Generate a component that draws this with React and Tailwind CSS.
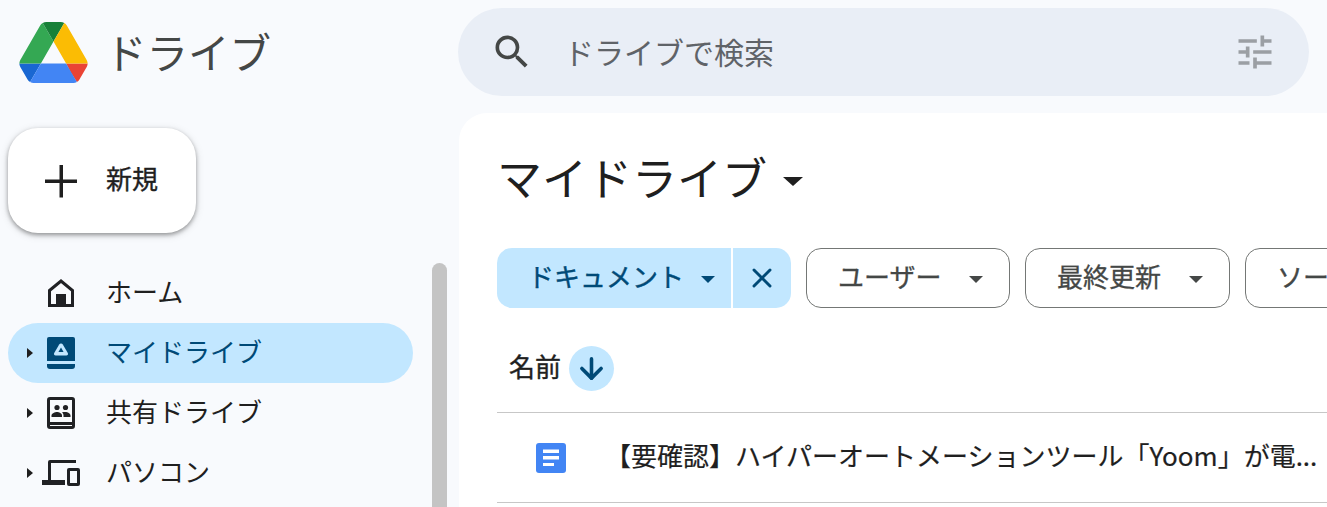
import { X, ArrowDown } from 'lucide-react'

const jp = 'font-["Noto_Sans_CJK_JP","Noto_Sans",sans-serif]'

function DriveLogo() {
  return (
    <svg viewBox="0 0 87.3 78" className="w-[69px] h-[61px] shrink-0">
      <path d="m6.6 66.85 3.85 6.65c.8 1.4 1.95 2.5 3.3 3.3l13.75-23.8h-27.5c0 1.55.4 3.1 1.2 4.5z" fill="#1967d2" />
      <path d="m43.65 25-13.75-23.8c-1.35.8-2.5 1.9-3.3 3.3l-25.4 44a9.06 9.06 0 0 0 -1.2 4.5h27.5z" fill="#34a853" />
      <path d="m73.55 76.8c1.35-.8 2.5-1.9 3.3-3.3l1.6-2.75 7.65-13.25c.8-1.4 1.2-2.95 1.2-4.5h-27.502l5.852 11.5z" fill="#ea4335" />
      <path d="m43.65 25 13.75-23.8c-1.35-.8-2.9-1.2-4.5-1.2h-18.5c-1.6 0-3.15.45-4.5 1.2z" fill="#188038" />
      <path d="m59.8 53h-32.3l-13.75 23.8c1.35.8 2.9 1.2 4.5 1.2h50.8c1.6 0 3.15-.45 4.5-1.2z" fill="#4285f4" />
      <path d="m73.4 26.5-12.7-22c-.8-1.4-1.95-2.5-3.3-3.3l-13.75 23.8 16.15 28h27.45c0-1.55-.4-3.1-1.2-4.5z" fill="#fbbc04" />
    </svg>
  )
}

function SearchIcon() {
  return (
    <svg viewBox="0 0 24 24" className="w-[44px] h-[44px] shrink-0" fill="#444746">
      <path d="M15.5 14h-.79l-.28-.27A6.471 6.471 0 0 0 16 9.5 6.5 6.5 0 1 0 9.5 16c1.61 0 3.09-.59 4.23-1.57l.27.28v.79l5 4.99L20.49 19l-4.99-5zm-6 0C7.01 14 5 11.99 5 9.5S7.01 5 9.5 5 14 7.01 14 9.5 11.99 14 9.5 14z" />
    </svg>
  )
}

function TuneIcon() {
  return (
    <svg viewBox="0 0 24 24" className="w-[44px] h-[44px]" fill="#9b9fa4">
      <path d="M3 17v2h6v-2H3zM3 5v2h10V5H3zm10 16v-2h8v-2h-8v-2h-2v6h2zM7 9v2H3v2h4v2h2V9H7zm14 4v-2H11v2h10zm-6-4h2V7h4V5h-4V3h-2v6z" />
    </svg>
  )
}

function HomeIcon() {
  return (
    <svg viewBox="0 0 26 28" className="w-[26px] h-[28px]" fill="none">
      <path d="M1.500 11.500 13 2l11.500 9.500v15h-23z" stroke="#202124" strokeWidth="3" />
      <rect x="8" y="15" width="10" height="12" fill="#202124" />
    </svg>
  )
}

function MyDriveIcon() {
  return (
    <svg viewBox="0 0 28 32" className="w-[28px] h-[32px]">
      <path d="M2 0h24a2 2 0 0 1 2 2v22H0V2a2 2 0 0 1 2-2z" fill="#004a77" />
      <path d="M0 27h28v2a3 3 0 0 1-3 3H3a3 3 0 0 1-3-3z" fill="#004a77" />
      <path d="M14 6.500c.8 0 1.400.4 1.800 1l5 8.500c.7 1.200-.1 2.500-1.500 2.500H8.700c-1.400 0-2.200-1.300-1.500-2.500l5-8.500c.4-.6 1-1 1.800-1z" fill="#c2e7ff" />
      <path d="M14 10.500l2.600 4.500h-5.200z" fill="#004a77" />
    </svg>
  )
}

function SharedIcon() {
  return (
    <svg viewBox="0 0 28 32" className="w-[28px] h-[32px]" fill="#202124">
      <path fillRule="evenodd" d="M3 0h22a3 3 0 0 1 3 3v26a3 3 0 0 1-3 3H3a3 3 0 0 1-3-3V3a3 3 0 0 1 3-3zm0 3v22h22V3zm0 25v1h22v-1z" />
      <circle cx="10" cy="10.500" r="2.600" />
      <circle cx="18.500" cy="10.500" r="2.600" />
      <path d="M4.500 20v-1.500c0-2 3.500-3.500 5.500-3.500s5 1.500 5 3.500V20z" />
      <path d="M16.500 20v-1.500c0-1.300-.6-2.400-1.500-3.200 1-.2 2.500-.3 3.500-.3 2 0 5 1.500 5 3.500V20z" />
    </svg>
  )
}

function ComputerIcon() {
  return (
    <svg viewBox="0 0 38 26" className="w-[38px] h-[26px]" fill="#202124">
      <path d="M6 2a2 2 0 0 1 2-2h26v3H9v17h14v5H0v-5h6z" />
      <path fillRule="evenodd" d="M27 8h9a2 2 0 0 1 2 2v14a2 2 0 0 1-2 2h-9a2 2 0 0 1-2-2V10a2 2 0 0 1 2-2zm1 3v12h7V11z" />
    </svg>
  )
}

function Caret({ className }) {
  return <div className={`w-0 h-0 border-x-[7px] border-x-transparent border-t-[7px] ${className}`} />
}

function NavItem({ icon, label, active, arrow }) {
  return (
    <div className={`flex items-center h-[60px] ml-2 w-[405px] rounded-full ${active ? 'bg-[#c2e7ff] text-[#004a77]' : 'text-[#1f1f1f]'}`}>
      <div className="w-[25px] flex justify-end">
        {arrow && <div className="w-0 h-0 border-y-[5.5px] border-y-transparent border-l-[6px] border-l-[#1f1f1f]" />}
      </div>
      <div className="w-[56px] flex justify-center">{icon}</div>
      <span className="ml-[17px] mb-[5px] text-[26px] leading-none whitespace-nowrap">{label}</span>
    </div>
  )
}

function FilterChip({ label, width }) {
  return (
    <div className={`${width} h-[60px] shrink-0 rounded-[15px] border border-[#747775] flex items-center justify-between pl-[31px] pr-[26px] text-[#444746]`}>
      <span className="mb-[5px] text-[26px] leading-none whitespace-nowrap [-webkit-text-stroke:0.3px]">{label}</span>
      <Caret className="border-t-[#444746] mt-[2px] ml-4" />
    </div>
  )
}

export default function App() {
  return (
    <div className={`w-[1327px] h-[507px] overflow-hidden bg-[#f8fafd] flex flex-col ${jp}`}>
      {/* Header */}
      <div className="h-[113px] shrink-0 flex pt-2">
        <div className="w-[458px] shrink-0 flex items-start pl-[19px] pt-[14px]">
          <DriveLogo />
          <span className="ml-[17px] mt-[3px] text-[41.500px] leading-[52px] text-[#444746] whitespace-nowrap">ドライブ</span>
        </div>
        <div className="w-[851px] h-[88px] rounded-full bg-[#e9eef6] flex items-center pl-[32px] pr-[32px]">
          <SearchIcon />
          <span className="ml-[30px] mb-[2px] text-[30px] leading-none text-[#5f6368] whitespace-nowrap flex-1">ドライブで検索</span>
          <TuneIcon />
        </div>
      </div>

      <div className="flex flex-1 min-h-0">
        {/* Sidebar */}
        <div className="w-[459px] shrink-0 flex">
          <div className="w-[432px] shrink-0">
            <div className="ml-2 mt-[15px] w-[188px] h-[105px] rounded-[30px] bg-white shadow-[0_2px_4px_rgba(0,0,0,0.35),0_2px_10px_rgba(0,0,0,0.12)] flex items-center pl-[32px]">
              <svg viewBox="0 0 42 42" className="w-[42px] h-[42px]">
                <path d="M19.500 5h3.500v14.500H37v3.500H23v14.500h-3.500V23H5v-3.500h14.500z" fill="#1f1f1f" />
              </svg>
              <span className="ml-[24px] mb-[5px] text-[26px] leading-none text-[#1f1f1f] [-webkit-text-stroke:0.4px]">新規</span>
            </div>
            <div className="mt-[30px]">
              <NavItem icon={<HomeIcon />} label="ホーム" />
              <NavItem icon={<MyDriveIcon />} label="マイドライブ" active arrow />
              <NavItem icon={<SharedIcon />} label="共有ドライブ" arrow />
              <NavItem icon={<ComputerIcon />} label="パソコン" arrow />
            </div>
          </div>
          <div className="w-[15px] h-[260px] mt-[150px] shrink-0 bg-[#c4c4c4] rounded-t-[8px]" />
        </div>

        {/* Main */}
        <div className="flex-1 min-w-0 bg-white rounded-tl-[28px] pl-[38px] overflow-hidden">
          <div className="h-[135px] flex items-start pt-[33px]">
            <span className="text-[45px] leading-[62px] text-[#1f1f1f] whitespace-nowrap">マイドライブ</span>
            <Caret className="border-x-[10px] border-t-[9px] border-t-[#1f1f1f] ml-[16px] mt-[31px]" />
          </div>

          <div className="flex items-center gap-[15px]">
            <div className="flex shrink-0 gap-[2px] h-[60px] text-[#004a77]">
              <div className="w-[234px] bg-[#c2e7ff] rounded-l-[15px] flex items-center pl-[31px]">
                <span className="mb-[5px] text-[26px] leading-none whitespace-nowrap [-webkit-text-stroke:0.4px]">ドキュメント</span>
                <Caret className="border-t-[#004a77] ml-[17px] mt-[2px]" />
              </div>
              <div className="w-[58px] bg-[#c2e7ff] rounded-r-[15px] flex items-center justify-center">
                <X size={32} strokeWidth={2.2} />
              </div>
            </div>
            <FilterChip label="ユーザー" width="w-[204px]" />
            <FilterChip label="最終更新" width="w-[205px]" />
            <FilterChip label="ソース" width="w-[205px]" />
          </div>

          <div className="h-[105px] flex items-center border-b border-[#c7c7c7] pl-[12px] pt-[16px]">
            <span className="mb-[5px] text-[26px] leading-none text-[#1f1f1f] whitespace-nowrap [-webkit-text-stroke:0.4px]">名前</span>
            <div className="ml-[8px] w-[45px] h-[45px] rounded-full bg-[#c2e7ff] flex items-center justify-center text-[#004a77]">
              <ArrowDown size={33} strokeWidth={2.6} />
            </div>
          </div>

          <div className="h-[90px] flex items-center border-b border-[#c7c7c7] pl-[39px]">
            <svg viewBox="0 0 30 30" className="w-[30px] h-[30px] shrink-0">
              <rect width="30" height="30" rx="3" fill="#4285f4" />
              <path d="M7 6.500h16v3.500H7zM7 13h16v3.500H7zM7 20h11v3H7z" fill="#fff" />
            </svg>
            <span className="ml-[39px] mb-[5px] text-[26px] leading-none text-[#1f1f1f] whitespace-nowrap [-webkit-text-stroke:0.2px]">【要確認】ハイパーオートメーションツール「Yoom」が電...</span>
          </div>
        </div>
      </div>
    </div>
  )
}
